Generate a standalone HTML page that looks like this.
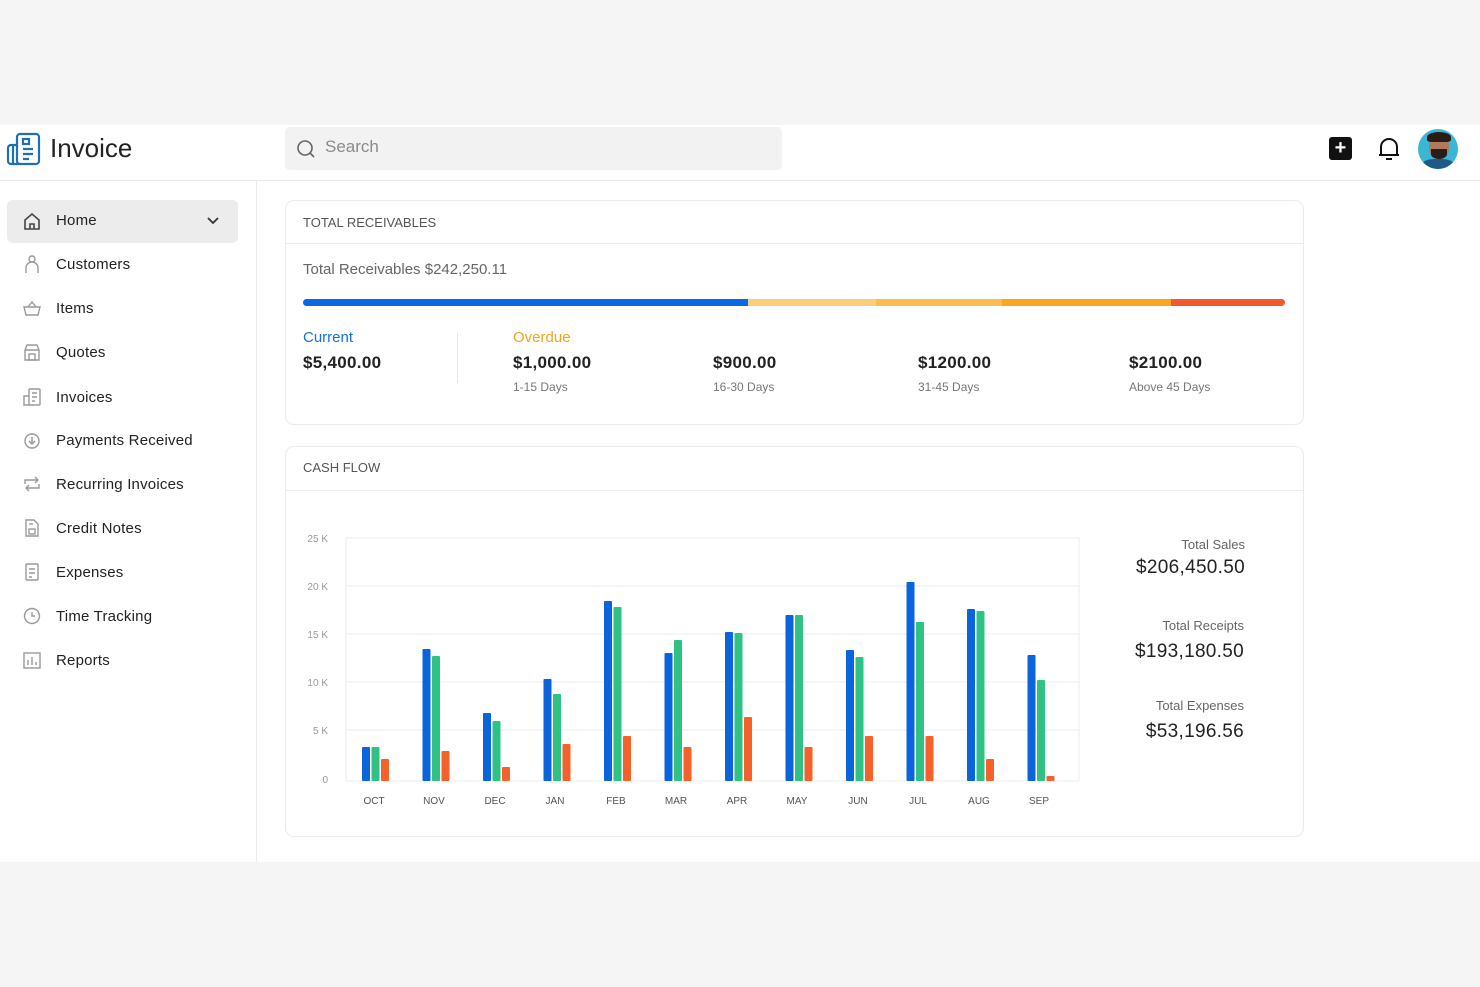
<!DOCTYPE html><html><head><meta charset="utf-8"><style>
*{margin:0;padding:0;box-sizing:border-box}
body{width:1480px;height:987px;background:#f5f5f5;font-family:"Liberation Sans",sans-serif;position:relative;overflow:hidden;color:#222}
.abs{position:absolute}
.hdr{left:0;top:125px;width:1480px;height:56px;background:#fff;border-bottom:1px solid #e8e8e8}
.side{left:0;top:181px;width:257px;height:681px;background:#fff;border-right:1px solid #ececec}
.main{left:257px;top:181px;width:1223px;height:681px;background:#fff}
.nav{position:absolute;left:56px;font-size:15px;color:#222;letter-spacing:0.2px;margin-top:1px}
.ic{position:absolute;left:23px;width:18px;height:18px}
.card{position:absolute;border:1px solid #ebebeb;border-radius:9px;background:#fff}
.t{position:absolute;white-space:nowrap}
.b{letter-spacing:0.3px}
</style></head><body>
<div class="abs hdr"></div>
<svg class="abs" style="left:6px;top:132px" width="36" height="34" viewBox="0 0 36 34" fill="none" stroke="#1f6fb5" stroke-width="2.2"><rect x="11" y="2" width="22" height="30" rx="3"/><path d="M11 13H5a3 3 0 0 0-3 3v13a3 3 0 0 0 3 3h8"/><path d="M7 13v19"/><rect x="17" y="7" width="6" height="5"/><path d="M17 17h10M17 22h10M17 27h6"/></svg>
<div class="t" style="left:50px;top:133px;font-size:26px;color:#222">Invoice</div>
<div class="abs" style="left:285px;top:127px;width:497px;height:43px;background:#f2f2f2;border-radius:5px"></div>
<svg class="abs" style="left:296px;top:139px" width="20" height="20" viewBox="0 0 20 20" fill="none" stroke="#666" stroke-width="1.6"><circle cx="9" cy="9" r="7"/><path d="M14 14l4 4"/></svg>
<div class="t" style="left:325px;top:137px;font-size:17px;color:#8a8a8a">Search</div>
<div class="abs" style="left:1329px;top:137px;width:23px;height:23px;background:#111;border-radius:3px;color:#fff;font-size:20px;font-weight:bold;line-height:22px;text-align:center">+</div>
<svg class="abs" style="left:1377px;top:136px" width="24" height="26" viewBox="0 0 24 26" fill="none" stroke="#111" stroke-width="2"><path d="M4 19V11a8 8 0 0 1 16 0v8H4zM2 19h20"/><path d="M9 23h6"/></svg>
<div class="abs" style="left:1418px;top:129px;width:40px;height:40px;border-radius:50%;background:#3ab6d6;overflow:hidden"><div class="abs" style="left:11px;top:6px;width:20px;height:24px;border-radius:45%;background:#b07a5a"></div><div class="abs" style="left:9px;top:3px;width:24px;height:10px;border-radius:50% 50% 20% 20%;background:#2a1c16"></div><div class="abs" style="left:13px;top:20px;width:16px;height:10px;border-radius:0 0 50% 50%;background:#2a1c16"></div><div class="abs" style="left:4px;top:30px;width:32px;height:14px;border-radius:40% 40% 0 0;background:#1f5a86"></div></div>

<div class="abs side"></div>
<div class="abs main"></div>
<div class="abs" style="left:7px;top:200px;width:231px;height:43px;background:#ececec;border-radius:6px"></div>
<svg class="ic" style="top:212px" viewBox="0 0 18 18" fill="none" stroke="#444" stroke-width="1.6"><path d="M2 8l7-6 7 6v9H2z"/><path d="M7 17v-5h4v5"/></svg>
<div class="nav" style="top:211px">Home</div>
<svg class="abs" style="left:206px;top:216px" width="14" height="10" viewBox="0 0 14 10" fill="none" stroke="#333" stroke-width="1.8"><path d="M2 2l5 5 5-5"/></svg>
<svg class="ic" style="top:255px" viewBox="0 0 18 18" fill="none" stroke="#999" stroke-width="1.4"><circle cx="9" cy="4" r="3"/><path d="M3 18v-5a6 6 0 0 1 12 0v5"/></svg>
<div class="nav" style="top:255px">Customers</div>
<svg class="ic" style="top:299px" viewBox="0 0 18 18" fill="none" stroke="#999" stroke-width="1.4"><path d="M1 8h16l-2 8H3z"/><path d="M5 8l4-5 4 5"/></svg>
<div class="nav" style="top:299px">Items</div>
<svg class="ic" style="top:343px" viewBox="0 0 18 18" fill="none" stroke="#999" stroke-width="1.4"><path d="M2 7l2-5h10l2 5v10H2z M2 7h14"/><rect x="6" y="11" width="6" height="6"/></svg>
<div class="nav" style="top:343px">Quotes</div>
<svg class="ic" style="top:388px" viewBox="0 0 18 18" fill="none" stroke="#999" stroke-width="1.4"><rect x="6" y="1" width="11" height="16" rx="1"/><path d="M6 8H1v9h6M9 5h5M9 9h5M9 13h3"/></svg>
<div class="nav" style="top:388px">Invoices</div>
<svg class="ic" style="top:431px" viewBox="0 0 18 18" fill="none" stroke="#999" stroke-width="1.4"><circle cx="9" cy="10" r="7"/><path d="M9 6v7M6 10l3 3 3-3"/></svg>
<div class="nav" style="top:431px">Payments Received</div>
<svg class="ic" style="top:475px" viewBox="0 0 18 18" fill="none" stroke="#999" stroke-width="1.4"><path d="M2 9V5h13M12 2l3 3-3 3M16 9v4H3M6 16l-3-3 3-3"/></svg>
<div class="nav" style="top:475px">Recurring Invoices</div>
<svg class="ic" style="top:519px" viewBox="0 0 18 18" fill="none" stroke="#999" stroke-width="1.4"><path d="M3 1h8l4 4v12H3z"/><rect x="6" y="10" width="6" height="5"/><path d="M6 5h4"/></svg>
<div class="nav" style="top:519px">Credit Notes</div>
<svg class="ic" style="top:563px" viewBox="0 0 18 18" fill="none" stroke="#999" stroke-width="1.4"><rect x="3" y="1" width="12" height="16" rx="1"/><path d="M6 6h6M6 10h6M6 14h3"/></svg>
<div class="nav" style="top:563px">Expenses</div>
<svg class="ic" style="top:607px" viewBox="0 0 18 18" fill="none" stroke="#999" stroke-width="1.4"><circle cx="9" cy="9" r="7.5"/><path d="M9 5v4h3"/></svg>
<div class="nav" style="top:607px">Time Tracking</div>
<svg class="ic" style="top:651px" viewBox="0 0 18 18" fill="none" stroke="#999" stroke-width="1.4"><rect x="1" y="2" width="16" height="15"/><path d="M5 14V9M9 14V6M13 14v-3"/></svg>
<div class="nav" style="top:651px">Reports</div>

<div class="card" style="left:285px;top:200px;width:1019px;height:225px"></div>
<div class="abs" style="left:286px;top:243px;width:1017px;height:1px;background:#ececec"></div>
<div class="t" style="left:303px;top:215px;font-size:13px;color:#555">TOTAL RECEIVABLES</div>
<div class="t" style="left:303px;top:261px;font-size:15px;color:#666">Total Receivables $242,250.11</div>
<div class="abs" style="left:303px;top:299px;width:982px;height:7px;border-radius:4px;overflow:hidden;background:linear-gradient(90deg,#0a68e0 0 445px,#fbce7c 445px 573px,#f9bd50 573px 699px,#f6a81f 699px 868px,#f05a2c 868px)"></div>
<div class="t" style="left:303px;top:329px;font-size:15px;color:#1372e0">Current</div>
<div class="t b" style="left:303px;top:353px;font-size:17px;font-weight:bold;color:#222">$5,400.00</div>
<div class="abs" style="left:457px;top:333px;width:1px;height:50px;background:#e6e6e6"></div>
<div class="t" style="left:513px;top:329px;font-size:15px;color:#f3a51a">Overdue</div>
<div class="t b" style="left:513px;top:353px;font-size:17px;font-weight:bold">$1,000.00</div>
<div class="t" style="left:513px;top:380px;font-size:12px;color:#777">1-15 Days</div>
<div class="t b" style="left:713px;top:353px;font-size:17px;font-weight:bold">$900.00</div>
<div class="t" style="left:713px;top:380px;font-size:12px;color:#777">16-30 Days</div>
<div class="t b" style="left:918px;top:353px;font-size:17px;font-weight:bold">$1200.00</div>
<div class="t" style="left:918px;top:380px;font-size:12px;color:#777">31-45 Days</div>
<div class="t b" style="left:1129px;top:353px;font-size:17px;font-weight:bold">$2100.00</div>
<div class="t" style="left:1129px;top:380px;font-size:12px;color:#777">Above 45 Days</div>

<div class="card" style="left:285px;top:446px;width:1019px;height:391px"></div>
<div class="abs" style="left:286px;top:490px;width:1017px;height:1px;background:#ececec"></div>
<div class="t" style="left:303px;top:460px;font-size:13px;color:#555">CASH FLOW</div>
<svg class="abs" style="left:0;top:0" width="1480" height="987" font-family="Liberation Sans,sans-serif">
<g stroke="#eeeeee" stroke-width="1"><path d="M346 538H1079M346 586H1079M346 634H1079M346 682H1079M346 730H1079M346 781H1079M346 538V781M1079 538V781"/></g>
<g font-size="10" fill="#999" text-anchor="end"><text x="328" y="542">25 K</text><text x="328" y="590">20 K</text><text x="328" y="638">15 K</text><text x="328" y="686">10 K</text><text x="328" y="734">5 K</text><text x="328" y="783">0</text></g>
<g font-size="10" fill="#555" text-anchor="middle"><text x="374" y="804">OCT</text><text x="434" y="804">NOV</text><text x="495" y="804">DEC</text><text x="555" y="804">JAN</text><text x="616" y="804">FEB</text><text x="676" y="804">MAR</text><text x="737" y="804">APR</text><text x="797" y="804">MAY</text><text x="858" y="804">JUN</text><text x="918" y="804">JUL</text><text x="979" y="804">AUG</text><text x="1039" y="804">SEP</text></g>
<g id="bars"></g>
</svg>
<div class="t" style="right:235px;top:537px;font-size:13px;color:#666">Total Sales</div>
<div class="t b" style="right:235px;top:557px;font-size:19px;color:#222">$206,450.50</div>
<div class="t" style="right:236px;top:618px;font-size:13px;color:#666">Total Receipts</div>
<div class="t b" style="right:236px;top:641px;font-size:19px;color:#222">$193,180.50</div>
<div class="t" style="right:236px;top:698px;font-size:13px;color:#666">Total Expenses</div>
<div class="t b" style="right:236px;top:721px;font-size:19px;color:#222">$53,196.56</div>
<script>
var d=[[747,747,759],[649,656,751],[713,721,767],[679,694,744],[601,607,736],[653,640,747],[632,633,717],[615,615,747],[650,657,736],[582,622,736],[609,611,759],[655,680,776]];
var c=["#0a64dc","#2fc284","#f4612b"],s="";
d.forEach(function(m,i){m.forEach(function(t,j){var x=362+60.5*i+j*9.5;s+='<rect x="'+x+'" y="'+t+'" width="8" height="'+(781-t)+'" rx="1" fill="'+c[j]+'"/>';});});
document.getElementById("bars").innerHTML=s;
</script>
</body></html>
